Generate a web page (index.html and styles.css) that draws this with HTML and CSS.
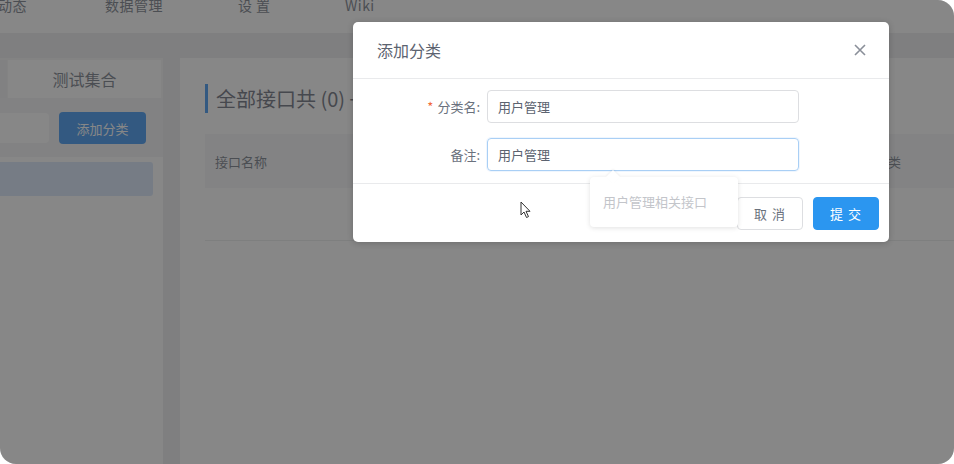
FILE: index.html
```html
<!DOCTYPE html>
<html lang="zh">
<head>
    <meta charset="UTF-8">
    <title>添加分类</title>
    <link rel="stylesheet" href="styles.css">
</head>
<body>
    <div class="frame">
        <div class="topnav">
            <span>动态</span>
            <span>数据管理</span>
            <span class="wide">设置</span>
            <span>Wiki</span>
        </div>

        <div class="main">
            <div class="sidebar">
                <div class="tabs">
                    <div class="tab">接口列表</div>
                    <div class="tab active">测试集合</div>
                </div>
                <div class="toolbar">
                    <div class="search"></div>
                    <button class="add-btn">添加分类</button>
                </div>
                <div class="cat-list">
                    <div class="cat-item"></div>
                </div>
            </div>

            <div class="content">
                <div class="title">全部接口共 (0) <span class="more">+</span></div>
                <div class="table-head">
                    <span>接口名称</span>
                    <span class="last">所属分类</span>
                </div>
                <div class="table-empty"></div>
            </div>
        </div>

        <div class="mask"></div>

        <div class="modal">
            <div class="modal-header">
                <h2>添加分类</h2>
                <svg class="close-icon" width="12" height="12" viewBox="0 0 12 12">
                    <path d="M1 1 L11 11 M11 1 L1 11" stroke="#8a8f99" stroke-width="1.6" fill="none"/>
                </svg>
            </div>
            <div class="modal-body">
                <div class="form-row">
                    <label><span class="req">*</span>分类名:</label>
                    <div class="input">用户管理</div>
                </div>
                <div class="form-row">
                    <label>备注:</label>
                    <div class="input focus">用户管理</div>
                </div>
            </div>
            <div class="modal-footer">
                <button class="btn">取 消</button>
                <button class="btn primary">提 交</button>
            </div>
        </div>

        <div class="popover">用户管理相关接口</div>

        <svg class="cursor" width="12" height="18" viewBox="0 0 12 18">
            <path d="M1 1 L1 14 L4 11 L6.5 16.5 L8.5 15.6 L6 10.3 L10 10.3 Z" fill="#fff" stroke="#333" stroke-width="1" stroke-linejoin="round"/>
        </svg>
    </div>
</body>
</html>
```

FILE: styles.css
```css
* {
    margin: 0;
    padding: 0;
    box-sizing: border-box;
}

body {
    background: #fff;
    font-family: "Noto Sans CJK SC", "Liberation Sans", sans-serif;
    color: #495060;
}

.frame {
    position: relative;
    width: 954px;
    height: 464px;
    overflow: hidden;
    border-radius: 0 16px 16px 16px;
    background: #ebecee;
}

.topnav {
    height: 33px;
    background: #fff;
    display: grid;
    grid-template-columns: 107px 133px 107px auto;
    margin-left: -2px;
    font-size: 14px;
    line-height: 12px;
    color: #6a717d;
}

.topnav span {
    margin-top: -1px;
    letter-spacing: 0.5px;
}

.topnav .wide {
    letter-spacing: 4px;
}

.main {
    display: flex;
    gap: 17px;
    padding-top: 25px;
    height: 431px;
    background: #ebecee;
}

/* 左侧分类 */
.sidebar {
    width: 163px;
    background: #fff;
    display: flex;
    flex-direction: column;
}

.tabs {
    display: flex;
    gap: 1px;
    height: 40px;
    padding-top: 2px;
    margin-left: -146px;
    background: #f4f4f5;
}

.tab {
    width: 153px;
    background: #f1f1f2;
    font-size: 16px;
    text-align: center;
    line-height: 38px;
    color: #6a717d;
}

.tab.active {
    background: #fff;
}

.toolbar {
    height: 59px;
    background: #f3f3f4;
    display: flex;
    align-items: center;
    gap: 10px;
    padding-top: 1px;
}

.search {
    width: 49px;
    height: 30px;
    background: #fff;
    border-radius: 0 4px 4px 0;
}

.add-btn {
    width: 87px;
    height: 32px;
    border: none;
    border-radius: 4px;
    background: #2d8cf0;
    color: #fff;
    font-family: inherit;
    font-size: 13px;
}

.cat-list {
    flex: 1;
    padding-top: 5px;
}

.cat-item {
    width: 153px;
    height: 34px;
    background: #d5e4fa;
    border-radius: 0 3px 3px 0;
}

/* 右侧列表 */
.content {
    flex: 1;
    background: #fff;
    padding: 26px 0 0 25px;
}

.title {
    border-left: 3px solid #2d8cf0;
    height: 29px;
    line-height: 29px;
    padding-left: 8px;
    font-size: 20px;
    color: #5c6370;
}

.title .more {
    margin-left: 0;
}

.table-head {
    margin-top: 21px;
    height: 54px;
    background: #f5f6f8;
    display: flex;
    justify-content: space-between;
    align-items: center;
    padding: 0 53px 0 10px;
    font-size: 13px;
    color: #6a717d;
}

.table-empty {
    height: 53px;
    border-bottom: 1px solid #e9eaec;
}

.mask {
    position: absolute;
    inset: 0;
    background: rgba(55, 55, 55, 0.6);
}

/* 弹窗 */
.modal {
    position: absolute;
    left: 353px;
    top: 22px;
    width: 536px;
    height: 220px;
    background: #fff;
    border-radius: 5px;
    box-shadow: 0 1px 6px rgba(0, 0, 0, 0.2);
    display: flex;
    flex-direction: column;
}

.modal-header {
    height: 57px;
    border-bottom: 1px solid #e9eaec;
    display: flex;
    justify-content: space-between;
    align-items: center;
    padding: 0 23px 0 24px;
}

.modal-header h2 {
    font-size: 16px;
    font-weight: normal;
    color: #5c6370;
}

.modal-body {
    padding: 11px 0 12px;
    border-bottom: 1px solid #e9eaec;
    display: flex;
    flex-direction: column;
    gap: 15px;
}

.form-row {
    display: flex;
    align-items: center;
}

.form-row label {
    width: 127px;
    text-align: right;
    font-size: 13px;
    color: #6a717d;
    margin-right: 7px;
}

.req {
    color: #f26b3a;
    margin-right: 4px;
}

.input {
    width: 312px;
    height: 33px;
    border: 1px solid #dddee1;
    border-radius: 4px;
    padding-left: 10px;
    line-height: 31px;
    font-size: 13px;
    color: #5c6370;
}

.input.focus {
    border-color: #a9cff5;
    box-shadow: 0 0 0 1px rgba(45, 140, 240, 0.08);
}

.modal-footer {
    flex: 1;
    display: flex;
    justify-content: flex-end;
    align-items: center;
    gap: 10px;
    padding-right: 10px;
}

.btn {
    width: 66px;
    height: 33px;
    border: 1px solid #dddee1;
    border-radius: 4px;
    background: #fff;
    font-family: inherit;
    font-size: 13px;
    letter-spacing: 1px;
    color: #6a717d;
}

.btn.primary {
    border-color: #2b96f0;
    background: #2b96f0;
    color: #fff;
}

.popover {
    position: absolute;
    left: 590px;
    top: 177px;
    width: 148px;
    height: 50px;
    background: #fff;
    border-radius: 4px;
    box-shadow: 0 1px 5px rgba(0, 0, 0, 0.12);
    padding: 0 13px;
    line-height: 50px;
    font-size: 13px;
    color: #c3c5ca;
}

.popover::before {
    content: "";
    position: absolute;
    left: 18px;
    top: -5px;
    width: 10px;
    height: 10px;
    background: #fff;
    transform: rotate(45deg);
    box-shadow: -1px -1px 2px rgba(0, 0, 0, 0.05);
}

.cursor {
    position: absolute;
    left: 520px;
    top: 201px;
}
```
